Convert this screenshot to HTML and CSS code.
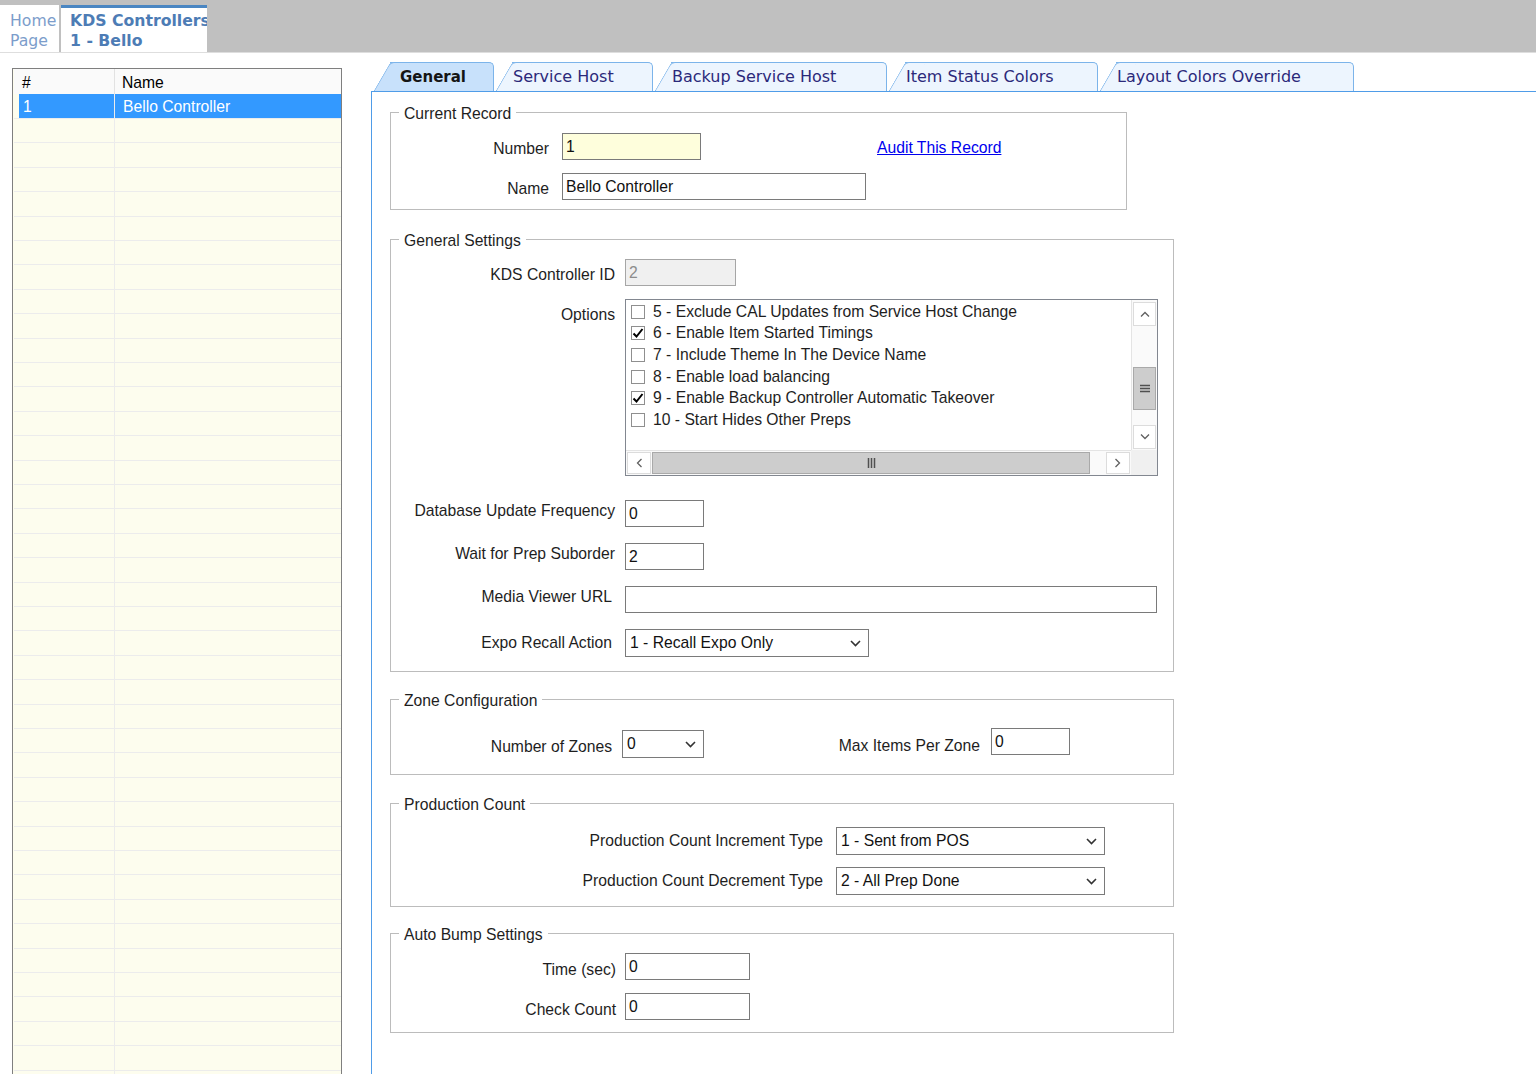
FILE: index.html
```html
<!DOCTYPE html>
<html lang="en">
<head>
    <meta charset="UTF-8">
    <meta name="viewport" content="width=device-width, initial-scale=1.0">
    <title>KDS Controllers</title>
    <link rel="stylesheet" href="styles.css">
</head>
<body>
    <header class="topbar">
        <div class="doc-tab home">Home<br>Page</div>
        <div class="doc-tab current">KDS Controllers<br>1 - Bello</div>
    </header>

    <div class="main">
        <div class="grid">
            <div class="grid-head">
                <div class="c1">#</div>
                <div class="c2">Name</div>
            </div>
            <div class="grid-row selected">
                <div class="rh"></div>
                <div class="c1">1</div>
                <div class="c2">Bello Controller</div>
            </div>
            <div class="grid-empty"></div>
        </div>

        <div class="editor">
            <div class="tabs">
                <div class="tab active t-general">General</div>
                <div class="tab t-service">Service Host</div>
                <div class="tab t-backup">Backup Service Host</div>
                <div class="tab t-item">Item Status Colors</div>
                <div class="tab t-layout">Layout Colors Override</div>
            </div>

            <div class="panel">
                <fieldset class="group record">
                    <legend>Current Record</legend>
                    <div class="row">
                        <label class="lbl" for="number">Number</label>
                        <input class="field f-number" id="number" type="text" value="1">
                        <a class="audit" href="#">Audit This Record</a>
                    </div>
                    <div class="row">
                        <label class="lbl" for="name">Name</label>
                        <input class="field f-name" id="name" type="text" value="Bello Controller">
                    </div>
                </fieldset>

                <fieldset class="group general">
                    <legend>General Settings</legend>
                    <div class="row">
                        <label class="lbl low" for="ctrlId">KDS Controller ID</label>
                        <input class="field f-id" id="ctrlId" type="text" value="2" disabled>
                    </div>
                    <div class="row options-row">
                        <label class="lbl">Options</label>
                        <div class="checklist">
                            <div class="items">
                                <div class="item"><span class="box"></span>5 - Exclude CAL Updates from Service Host Change</div>
                                <div class="item"><span class="box checked"><svg width="12" height="12" viewBox="0 0 12 12"><path d="M1.5 6.5 L4.5 9.5 L10.5 2" fill="none" stroke="#000" stroke-width="2"/></svg></span>6 - Enable Item Started Timings</div>
                                <div class="item"><span class="box"></span>7 - Include Theme In The Device Name</div>
                                <div class="item"><span class="box"></span>8 - Enable load balancing</div>
                                <div class="item"><span class="box checked"><svg width="12" height="12" viewBox="0 0 12 12"><path d="M1.5 6.5 L4.5 9.5 L10.5 2" fill="none" stroke="#000" stroke-width="2"/></svg></span>9 - Enable Backup Controller Automatic Takeover</div>
                                <div class="item"><span class="box"></span>10 - Start Hides Other Preps</div>
                            </div>
                            <div class="vbar">
                                <div class="sb-btn"><svg width="10" height="6" viewBox="0 0 10 6"><path d="M1 5.5 L5 1.5 L9 5.5" fill="none" stroke="#606060" stroke-width="1.3"/></svg></div>
                                <div class="sb-thumb v-thumb"><svg width="10" height="9" viewBox="0 0 10 9"><path d="M0 1.5 H10 M0 4.5 H10 M0 7.5 H10" stroke="#505050" stroke-width="1.5"/></svg></div>
                                <div class="sb-btn down"><svg width="10" height="6" viewBox="0 0 10 6"><path d="M1 0.5 L5 4.5 L9 0.5" fill="none" stroke="#606060" stroke-width="1.3"/></svg></div>
                            </div>
                            <div class="hbar">
                                <div class="sb-btn"><svg width="6" height="10" viewBox="0 0 6 10"><path d="M5.5 1 L1.5 5 L5.5 9" fill="none" stroke="#606060" stroke-width="1.3"/></svg></div>
                                <div class="sb-thumb h-thumb"><svg width="9" height="10" viewBox="0 0 9 10"><path d="M1.5 0 V10 M4.5 0 V10 M7.5 0 V10" stroke="#505050" stroke-width="1.5"/></svg></div>
                                <div class="sb-btn right"><svg width="6" height="10" viewBox="0 0 6 10"><path d="M0.5 1 L4.5 5 L0.5 9" fill="none" stroke="#606060" stroke-width="1.3"/></svg></div>
                            </div>
                            <div class="corner"></div>
                        </div>
                    </div>
                    <div class="row after-list">
                        <label class="lbl high" for="dbFreq">Database Update Frequency</label>
                        <input class="field f-short" id="dbFreq" type="text" value="0">
                    </div>
                    <div class="row">
                        <label class="lbl high" for="waitPrep">Wait for Prep Suborder</label>
                        <input class="field f-short" id="waitPrep" type="text" value="2">
                    </div>
                    <div class="row">
                        <label class="lbl high tight" for="mediaUrl">Media Viewer URL</label>
                        <input class="field f-url" id="mediaUrl" type="text" value="">
                    </div>
                    <div class="row">
                        <label class="lbl mid tight">Expo Recall Action</label>
                        <div class="combo f-expo"><span>1 - Recall Expo Only</span><svg width="11" height="7" viewBox="0 0 11 7"><path d="M1 1 L5.5 5.5 L10 1" fill="none" stroke="#333" stroke-width="1.6"/></svg></div>
                    </div>
                </fieldset>

                <fieldset class="group zone">
                    <legend>Zone Configuration</legend>
                    <div class="row">
                        <label class="lbl low">Number of Zones</label>
                        <div class="combo f-zones"><span>0</span><svg width="11" height="7" viewBox="0 0 11 7"><path d="M1 1 L5.5 5.5 L10 1" fill="none" stroke="#333" stroke-width="1.6"/></svg></div>
                        <label class="lbl lbl2" for="maxItems">Max Items Per Zone</label>
                        <input class="field f-short top" id="maxItems" type="text" value="0">
                    </div>
                </fieldset>

                <fieldset class="group production">
                    <legend>Production Count</legend>
                    <div class="row">
                        <label class="lbl mid">Production Count Increment Type</label>
                        <div class="combo f-prod"><span>1 - Sent from POS</span><svg width="11" height="7" viewBox="0 0 11 7"><path d="M1 1 L5.5 5.5 L10 1" fill="none" stroke="#333" stroke-width="1.6"/></svg></div>
                    </div>
                    <div class="row">
                        <label class="lbl mid">Production Count Decrement Type</label>
                        <div class="combo f-prod"><span>2 - All Prep Done</span><svg width="11" height="7" viewBox="0 0 11 7"><path d="M1 1 L5.5 5.5 L10 1" fill="none" stroke="#333" stroke-width="1.6"/></svg></div>
                    </div>
                </fieldset>

                <fieldset class="group bump">
                    <legend>Auto Bump Settings</legend>
                    <div class="row">
                        <label class="lbl lower" for="bumpTime">Time (sec)</label>
                        <input class="field f-bump" id="bumpTime" type="text" value="0">
                    </div>
                    <div class="row">
                        <label class="lbl lower" for="checkCount">Check Count</label>
                        <input class="field f-bump" id="checkCount" type="text" value="0">
                    </div>
                </fieldset>
            </div>
        </div>
    </div>
</body>
</html>
```

FILE: styles.css
```css
body {
    margin: 0;
    width: 1536px;
    height: 1074px;
    overflow: hidden;
    background: #fff;
    font-family: "Liberation Sans", Arial, sans-serif;
    font-size: 15.7px;
    color: #1e1e1e;
}

.topbar {
    display: flex;
    align-items: flex-end;
    height: 52px;
    background: #c0c0c0;
    border-bottom: 1px solid #dedede;
    font-family: "DejaVu Sans", Verdana, sans-serif;
    font-size: 15.7px;
}
.doc-tab {
    box-sizing: border-box;
    height: 47px;
    background: #fff;
    line-height: 20px;
    padding: 6px 0 0 10px;
}
.doc-tab.home {
    width: 59px;
    color: #7c9dcb;
}
.doc-tab.current {
    width: 146px;
    margin-left: 2px;
    padding: 3px 0 0 9px;
    border-top: 3px solid #4a86c2;
    font-weight: bold;
    color: #4d7cb5;
    white-space: nowrap;
    overflow: hidden;
}

.main {
    display: flex;
    align-items: flex-start;
}

.grid {
    box-sizing: border-box;
    width: 330px;
    height: 1030px;
    margin: 15px 0 0 12px;
    padding-left: 1px;
    border: 1px solid #7f7f7f;
    background: #fdfdee;
    display: flex;
    flex-direction: column;
    color: #000;
}
.grid-head {
    display: flex;
    height: 25px;
    line-height: 27px;
    background: #fafafa;
}
.grid-head .c1 {
    box-sizing: border-box;
    width: 101px;
    padding-left: 8px;
    border-right: 1px solid #e2e2e2;
}
.grid-head .c2 {
    padding-left: 7px;
}
.grid-row {
    display: flex;
    height: 25px;
    line-height: 25px;
    box-sizing: border-box;
    border-bottom: 1px solid #ececec;
}
.grid-row .rh {
    width: 5px;
}
.grid-row .c1 {
    box-sizing: border-box;
    width: 96px;
    padding-left: 4px;
    border-right: 1px solid #ececec;
}
.grid-row .c2 {
    flex: 1;
    padding-left: 8px;
}
.grid-row.selected .c1,
.grid-row.selected .c2 {
    background: #3399ff;
    color: #fff;
}
.grid-empty {
    flex: 1;
    background:
        linear-gradient(to right, transparent 100px, #ececec 100px, #ececec 101px, transparent 101px),
        repeating-linear-gradient(to bottom, transparent 0, transparent 23.4px, #ececec 23.4px, #ececec 24.4px);
}

.editor {
    flex: 1;
    margin: 9px 0 0 29px;
}

.tabs {
    display: flex;
    height: 29px;
}
.tab {
    position: relative;
    z-index: 1;
    box-sizing: border-box;
    height: 29px;
    margin-left: 18px;
    padding-left: 1px;
    border: 1px solid #7cb4ea;
    border-left: 0;
    border-bottom: 0;
    border-top-right-radius: 5px;
    background: #edf5fe;
    color: #2b297a;
    font-family: "DejaVu Sans", Verdana, sans-serif;
    font-size: 16px;
    line-height: 28px;
    white-space: nowrap;
}
.tab::before {
    content: "";
    position: absolute;
    z-index: -1;
    top: -1px;
    bottom: 0;
    left: -8.5px;
    width: 20px;
    background: inherit;
    border-top: 1px solid #7cb4ea;
    border-left: 1px solid #7cb4ea;
    border-top-left-radius: 4px;
    transform: skewX(-30deg);
}
.tab.active {
    background: #c8e1fb;
    color: #151515;
    font-weight: bold;
    font-size: 15px;
}
.t-general { width: 104px; margin-left: 19px; padding-left: 10px; }
.t-service { width: 141px; }
.t-backup { width: 216px; }
.t-item { width: 193px; }
.t-layout { width: 238px; }

.panel {
    height: 1000px;
    padding: 11px 0 0 18px;
    border-top: 1px solid #4f9ce8;
    border-left: 1px solid #4f9ce8;
}

.group {
    box-sizing: border-box;
    width: 784px;
    min-width: 0;
    margin: 0;
    padding: 0;
    border: 1px solid #bcbcbc;
}
.group legend {
    margin-left: 8px;
    padding: 4px 5px 0;
    line-height: 14px;
}

.row {
    display: flex;
    align-items: center;
}
.lbl {
    flex-shrink: 0;
    text-align: right;
    padding-top: 3px;
    white-space: nowrap;
}
.lbl.low { padding-top: 5px; }
.lbl.lower { padding-top: 7px; }
.lbl.mid { padding-top: 0; }
.lbl.high { padding-top: 0; padding-bottom: 5px; }
.field {
    box-sizing: border-box;
    height: 27px;
    margin: 0;
    padding: 0 3px;
    border: 1px solid #7a7a7a;
    border-radius: 0;
    background: #fff;
    font: inherit;
    color: #111;
    outline: none;
}
.combo {
    box-sizing: border-box;
    display: flex;
    align-items: center;
    justify-content: space-between;
    height: 28px;
    padding: 0 7px 0 4px;
    border: 1px solid #7a7a7a;
    background: #fff;
    color: #111;
}

.record {
    width: 737px;
    padding: 12px 0 9px;
}
.record .lbl {
    width: 158px;
    margin-right: 13px;
    padding-top: 5px;
}
.record .row + .row {
    margin-top: 13px;
}
.f-number {
    width: 139px;
    background: #fefedc;
}
.f-name {
    width: 304px;
}
.audit {
    margin-left: 176px;
    padding-top: 3px;
    color: #0000ee;
}

.general {
    margin-top: 20px;
    padding: 11px 0 14px;
}
.general .lbl {
    width: 224px;
    margin-right: 10px;
}
.general .lbl.tight {
    box-sizing: border-box;
    padding-right: 3px;
}
.general .row + .row {
    margin-top: 16px;
}
.general .row.options-row {
    margin-top: 13px;
    align-items: flex-start;
}
.options-row .lbl {
    padding-top: 7px;
    line-height: 18px;
}
.general .row.after-list {
    margin-top: 24px;
}
.f-id {
    width: 111px;
    background: #f0f0f0;
    border-color: #a6a6a6;
    color: #8c8c8c;
}
.f-short {
    width: 79px;
}
.f-url {
    width: 532px;
}
.f-expo {
    width: 244px;
}

.checklist {
    box-sizing: border-box;
    width: 533px;
    height: 177px;
    border: 1px solid #828790;
    display: grid;
    grid-template-columns: 1fr 26px;
    grid-template-rows: 150px 25px;
}
.items {
    padding: 1px 0 0 5px;
}
.item {
    display: flex;
    align-items: center;
    height: 21.6px;
    white-space: nowrap;
}
.box {
    box-sizing: border-box;
    display: flex;
    align-items: center;
    justify-content: center;
    width: 14px;
    height: 14px;
    margin-right: 8px;
    border: 1px solid #8f8f8f;
    background: #fff;
}
.vbar {
    display: flex;
    flex-direction: column;
    padding: 2px 1px 1px;
    background: #fafafa;
    border-left: 1px solid #e4e4e4;
}
.sb-btn {
    box-sizing: border-box;
    display: flex;
    align-items: center;
    justify-content: center;
    height: 24px;
    background: #fff;
    border: 1px solid #dcdcdc;
}
.sb-btn.down {
    margin-top: auto;
}
.sb-thumb {
    box-sizing: border-box;
    display: flex;
    align-items: center;
    justify-content: center;
    background: #cdcdcd;
    border: 1px solid #a9a9a9;
}
.v-thumb {
    height: 43px;
    margin-top: 41px;
}
.hbar {
    display: flex;
    padding: 1px;
    background: #fafafa;
    border-top: 1px solid #e4e4e4;
}
.hbar .sb-btn {
    width: 24px;
    height: auto;
}
.hbar .sb-btn.right {
    margin-left: auto;
}
.h-thumb {
    width: 438px;
    margin-left: 1px;
}
.corner {
    background: #f0f0f0;
}

.zone {
    margin-top: 18px;
    padding: 22px 0 16px;
}
.zone .lbl {
    width: 221px;
    margin-right: 10px;
}
.zone .lbl.lbl2 {
    width: 276px;
    margin-right: 11px;
    padding-top: 3px;
}
.f-zones {
    width: 82px;
}
.field.top {
    align-self: flex-start;
    margin-top: -2px;
}

.production {
    margin-top: 19px;
    padding: 15px 0 11px;
}
.production .lbl {
    width: 432px;
    margin-right: 13px;
}
.production .row + .row {
    margin-top: 12px;
}
.f-prod {
    width: 269px;
}

.bump {
    margin-top: 17px;
    padding: 11px 0 12px;
}
.bump .lbl {
    width: 225px;
    margin-right: 9px;
}
.bump .row + .row {
    margin-top: 13px;
}
.f-bump {
    width: 125px;
}
```
